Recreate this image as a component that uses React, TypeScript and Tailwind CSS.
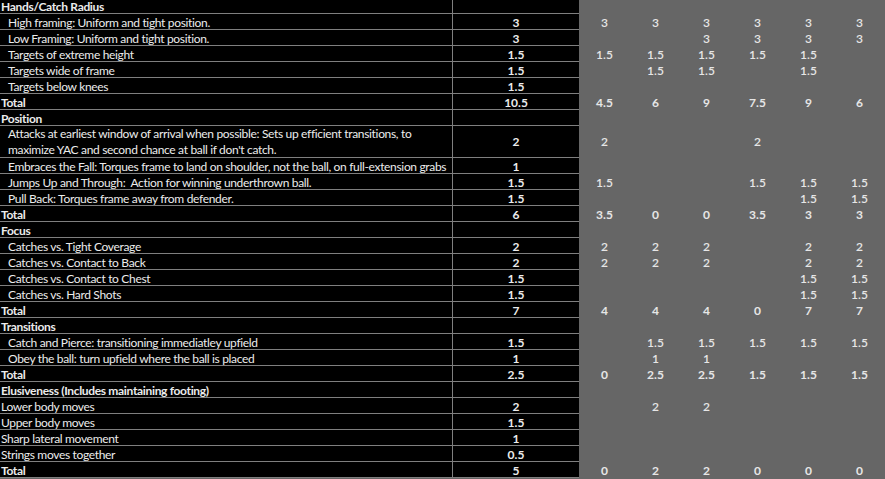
import React from "react";

type Row = {
  label: string;
  kind: "head" | "item" | "total" | "flat";
  value?: string;
  cols?: string[];
  tall?: boolean;
};

const e = "";
const rows: Row[] = [
  { label: "Hands/Catch Radius", kind: "head" },
  { label: "High framing: Uniform and tight position.", kind: "item", value: "3", cols: ["3", "3", "3", "3", "3", "3"] },
  { label: "Low Framing: Uniform and tight position.", kind: "item", value: "3", cols: [e, e, "3", "3", "3", "3"] },
  { label: "Targets of extreme height", kind: "item", value: "1.5", cols: ["1.5", "1.5", "1.5", "1.5", "1.5", e] },
  { label: "Targets wide of frame", kind: "item", value: "1.5", cols: [e, "1.5", "1.5", e, "1.5", e] },
  { label: "Targets below knees", kind: "item", value: "1.5" },
  { label: "Total", kind: "total", value: "10.5", cols: ["4.5", "6", "9", "7.5", "9", "6"] },
  { label: "Position", kind: "head" },
  {
    label:
      "Attacks at earliest window of arrival when possible: Sets up efficient transitions, to maximize YAC and second chance at ball if don't catch.",
    kind: "item",
    value: "2",
    cols: ["2", e, e, "2", e, e],
    tall: true,
  },
  { label: "Embraces the Fall: Torques frame to land on shoulder, not the ball, on full-extension grabs", kind: "item", value: "1" },
  { label: "Jumps Up and Through:  Action for winning underthrown ball.", kind: "item", value: "1.5", cols: ["1.5", e, e, "1.5", "1.5", "1.5"] },
  { label: "Pull Back: Torques frame away from defender.", kind: "item", value: "1.5", cols: [e, e, e, e, "1.5", "1.5"] },
  { label: "Total", kind: "total", value: "6", cols: ["3.5", "0", "0", "3.5", "3", "3"] },
  { label: "Focus", kind: "head" },
  { label: "Catches vs. Tight Coverage", kind: "item", value: "2", cols: ["2", "2", "2", e, "2", "2"] },
  { label: "Catches vs. Contact to Back", kind: "item", value: "2", cols: ["2", "2", "2", e, "2", "2"] },
  { label: "Catches vs. Contact to Chest", kind: "item", value: "1.5", cols: [e, e, e, e, "1.5", "1.5"] },
  { label: "Catches vs. Hard Shots", kind: "item", value: "1.5", cols: [e, e, e, e, "1.5", "1.5"] },
  { label: "Total", kind: "total", value: "7", cols: ["4", "4", "4", "0", "7", "7"] },
  { label: "Transitions", kind: "head" },
  { label: "Catch and Pierce: transitioning immediatley upfield", kind: "item", value: "1.5", cols: [e, "1.5", "1.5", "1.5", "1.5", "1.5"] },
  { label: "Obey the ball: turn upfield where the ball is placed", kind: "item", value: "1", cols: [e, "1", "1", e, e, e] },
  { label: "Total", kind: "total", value: "2.5", cols: ["0", "2.5", "2.5", "1.5", "1.5", "1.5"] },
  { label: "Elusiveness (Includes maintaining footing)", kind: "head" },
  { label: "Lower body moves", kind: "flat", value: "2", cols: [e, "2", "2", e, e, e] },
  { label: "Upper body moves", kind: "flat", value: "1.5" },
  { label: "Sharp lateral movement", kind: "flat", value: "1" },
  { label: "Strings moves together", kind: "flat", value: "0.5" },
  { label: "Total", kind: "total", value: "5", cols: ["0", "2", "2", "0", "0", "0"] },
];

export default function App() {
  return (
    <div
      className="w-[885px] h-[479px] overflow-hidden bg-[#666666]"
      style={{ fontFamily: "Lato, 'Open Sans', sans-serif" }}
    >
      <div className="mt-[-2px] flex flex-col">
        {rows.map((r, i) => {
          const bold = r.kind === "head" || r.kind === "total";
          const h = r.tall ? "h-[32px]" : "h-[16px]";
          return (
            <div key={i} className={`flex ${h}`}>
              <div
                className={`w-[453px] shrink-0 overflow-hidden bg-black border-b border-r border-[#7f7f7f] text-[#ececec] text-[12px] tracking-[-0.33px] flex ${
                  r.tall ? "items-center leading-[16px] pt-[1px]" : "items-end leading-[12px] whitespace-pre"
                } ${r.kind === "item" ? "pl-[8px]" : "pl-[1px]"} ${bold ? "font-bold" : "font-normal"}`}
              >
                <span>{r.label}</span>
              </div>
              <div
                className={`w-[126px] shrink-0 bg-black border-b border-[#7f7f7f] text-[#ececec] text-[12px] font-bold flex justify-center ${
                  r.tall ? "items-center" : "items-end leading-[12px]"
                }`}
              >
                {r.value ?? ""}
              </div>
              <div className="flex-1 grid grid-cols-6">
                {Array.from({ length: 6 }).map((_, j) => (
                  <div
                    key={j}
                    className={`flex justify-center text-[12px] text-[#e6e6e6] ${
                      r.kind === "total" ? "font-bold" : "font-semibold"
                    } ${r.tall ? "items-center" : "items-end leading-[12px] pb-[1px]"}`}
                  >
                    {r.cols ? r.cols[j] : ""}
                  </div>
                ))}
              </div>
            </div>
          );
        })}
      </div>
    </div>
  );
}
